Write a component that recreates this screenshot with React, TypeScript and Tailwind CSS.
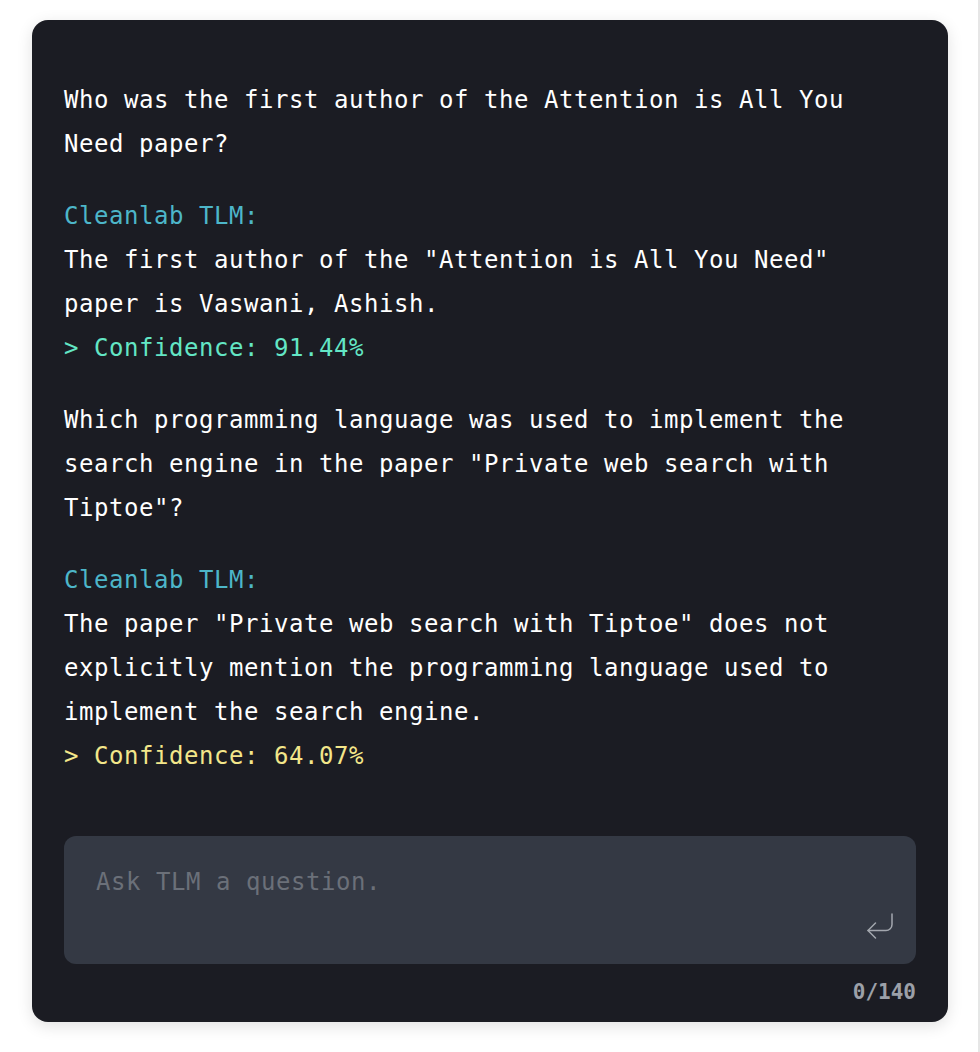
import React from 'react';

type Message =
  | { kind: 'question'; text: string }
  | { kind: 'answer'; text: string; confidence: string; tone: 'high' | 'low' };

const messages: Message[] = [
  { kind: 'question', text: 'Who was the first author of the Attention is All You Need paper?' },
  {
    kind: 'answer',
    text: 'The first author of the "Attention is All You Need" paper is Vaswani, Ashish.',
    confidence: '91.44%',
    tone: 'high',
  },
  {
    kind: 'question',
    text: 'Which programming language was used to implement the search engine in the paper "Private web search with Tiptoe"?',
  },
  {
    kind: 'answer',
    text: 'The paper "Private web search with Tiptoe" does not explicitly mention the programming language used to implement the search engine.',
    confidence: '64.07%',
    tone: 'low',
  },
];

const EnterIcon = () => (
  <svg
    xmlns="http://www.w3.org/2000/svg"
    viewBox="0 0 24 24"
    width={36}
    height={36}
    fill="none"
    stroke="currentColor"
    strokeWidth={1}
    strokeLinecap="round"
    strokeLinejoin="round"
    className="text-[#a3a7ae]"
  >
    <polyline points="9 10 4 15 9 20" />
    <path d="M20 4v7a4 4 0 0 1-4 4H4" />
  </svg>
);

export default function App() {
  return (
    <div className="w-full h-[1052px] bg-white border-r-2 border-[#e6e6e6] pl-8 pt-5 font-['DejaVu_Sans_Mono',monospace]">
      <div className="w-[916px] h-[1002px] bg-[#1b1c23] rounded-2xl shadow-[0_4px_16px_rgba(0,0,0,0.12)] flex flex-col pt-[58px] px-8 pb-4">
        <div className="flex flex-col gap-7 text-[24px] leading-[44px] tracking-[0.55px]">
          {messages.map((m, i) =>
            m.kind === 'question' ? (
              <p key={i} className="text-white">
                {m.text}
              </p>
            ) : (
              <div key={i}>
                <p className="text-[#4db6c9]">Cleanlab TLM:</p>
                <p className="text-white">{m.text}</p>
                <p className={m.tone === 'high' ? 'text-[#63e6c5]' : 'text-[#f3e68a]'}>
                  &gt; Confidence: {m.confidence}
                </p>
              </div>
            )
          )}
        </div>

        <div className="mt-auto h-[128px] bg-[#343944] rounded-xl flex flex-col pl-8 pr-[18px] pt-[24px] pb-5">
          <p className="text-[24px] leading-[44px] tracking-[0.55px] text-[#6b7079]">Ask TLM a question.</p>
          <div className="mt-auto self-end">
            <EnterIcon />
          </div>
        </div>

        <p className="mt-[14px] text-right text-[21px] leading-[28px] font-semibold text-[#9ca0a8]">0/140</p>
      </div>
    </div>
  );
}
